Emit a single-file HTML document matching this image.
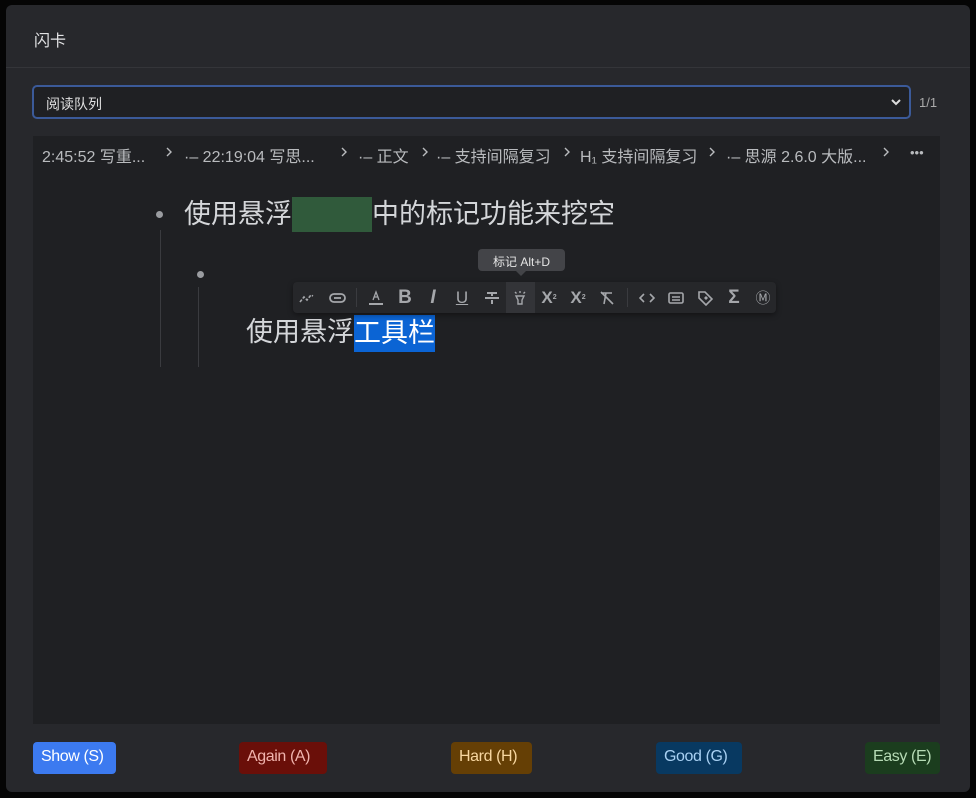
<!DOCTYPE html>
<html><head><meta charset="utf-8"><style>
*{box-sizing:border-box;margin:0;padding:0}
body{width:976px;height:798px;background:#050505;position:relative;overflow:hidden;font-family:"Liberation Sans","Noto Sans CJK SC",sans-serif;color:#d4d6d9}
.dlg{position:absolute;left:6px;top:5px;width:964px;height:787px;background:#27282c;border-radius:6px}
.hd{position:absolute;left:0;top:0;width:964px;height:63px;border-bottom:1px solid #343539;font-size:16px;color:#e1e2e4;padding:22px 0 0 28px}
.sel{position:absolute;left:26px;top:80px;width:879px;height:34px;border:2px solid #3b5a99;border-radius:5px;background:#1f2023;font-size:14px;padding:7px 0 0 12px;color:#e0e0e0}
.sel svg{position:absolute;right:8px;top:11px}
.cnt{position:absolute;left:913px;top:90px;font-size:13px;color:#aaa}
.ed{position:absolute;left:27px;top:131px;width:907px;height:588px;background:#1f2023}
.bc span{position:absolute;top:7px;font-size:16px;color:#b9bbbe;white-space:nowrap}
.bc svg{position:absolute;top:11px}
.b{position:absolute;font-size:27px;color:#d4d6d9;white-space:nowrap;line-height:34px}
.dot{position:absolute;width:7px;height:7px;border-radius:50%;background:#9a9ca0}
.vl{position:absolute;width:1px;background:#3a3b3f}
.tb{position:absolute;left:260px;top:146px;width:483px;height:31px;background:#26272a;border-radius:4px;box-shadow:0 2px 6px rgba(0,0,0,.4)}
.tb i{position:absolute;top:0;width:28px;height:31px;display:flex;align-items:center;justify-content:center;font-style:normal;font-size:17px;color:#a5a7ab}
.tip{position:absolute;left:445px;top:113px;width:87px;height:22px;background:#434448;border-radius:4px;font-size:12px;color:#e5e5e5;text-align:center;padding-top:4px}
.btn{position:absolute;top:737px;height:32px;border-radius:4px;font-size:16px;padding:6px 8px 0;white-space:nowrap;letter-spacing:-0.4px}
</style></head><body>
<div class="dlg">
<div class="hd">闪卡</div>
<div class="sel">阅读队列<svg width="10" height="8" viewBox="0 0 10 8"><path d="M1 2l4 4 4-4" stroke="#ddd" stroke-width="2" fill="none"/></svg></div>
<div class="cnt">1/1</div>
<div class="ed">
<div class="bc">
<span style="left:9px">2:45:52 写重...</span>
<svg style="left:133px" width="6" height="10" viewBox="0 0 6 10"><path d="M1 1l4 4-4 4" stroke="#b9bbbe" stroke-width="1.4" fill="none"/></svg>
<span style="left:151px">·– 22:19:04 写思...</span>
<svg style="left:308px" width="6" height="10" viewBox="0 0 6 10"><path d="M1 1l4 4-4 4" stroke="#b9bbbe" stroke-width="1.4" fill="none"/></svg>
<span style="left:325px">·– 正文</span>
<svg style="left:389px" width="6" height="10" viewBox="0 0 6 10"><path d="M1 1l4 4-4 4" stroke="#b9bbbe" stroke-width="1.4" fill="none"/></svg>
<span style="left:403px">·– 支持间隔复习</span>
<svg style="left:531px" width="6" height="10" viewBox="0 0 6 10"><path d="M1 1l4 4-4 4" stroke="#b9bbbe" stroke-width="1.4" fill="none"/></svg>
<span style="left:547px">H₁ 支持间隔复习</span>
<svg style="left:676px" width="6" height="10" viewBox="0 0 6 10"><path d="M1 1l4 4-4 4" stroke="#b9bbbe" stroke-width="1.4" fill="none"/></svg>
<span style="left:693px">·– 思源 2.6.0 大版...</span>
<svg style="left:850px" width="6" height="10" viewBox="0 0 6 10"><path d="M1 1l4 4-4 4" stroke="#b9bbbe" stroke-width="1.4" fill="none"/></svg>
<span style="left:877px;font-size:13px;top:9px">•••</span>
</div>
<div class="dot" style="left:123px;top:75px"></div>
<div class="b" style="left:151px;top:61px">使用悬浮<span style="display:inline-block;width:80px;height:35px;background:#305a3b;vertical-align:top"></span>中的标记功能来挖空</div>
<div class="vl" style="left:127px;top:94px;height:137px"></div>
<div class="dot" style="left:164px;top:135px"></div>
<div class="vl" style="left:165px;top:151px;height:80px"></div>
<div class="b" style="left:213px;top:179px">使用悬浮<span style="background:#0b64d4;color:#fff;display:inline-block;height:37px;padding-top:1px;vertical-align:top">工具栏</span></div>
<div class="tip">标记 Alt+D</div>
<div style="position:absolute;left:483px;top:135px;border:5px solid transparent;border-top-color:#434448"></div>
<div class="tb">
<i style="left:0px"><svg width="16" height="12" viewBox="0 0 16 12"><path d="M1 10l4-5 3 3 4-5 2 1" stroke="#a5a7ab" stroke-width="1.6" fill="none" stroke-dasharray="3 1.5"/></svg></i>
<i style="left:30px"><svg width="17" height="10" viewBox="0 0 17 10"><rect x="1" y="1" width="15" height="8" rx="4" stroke="#a5a7ab" stroke-width="1.8" fill="none"/><path d="M5 5h7" stroke="#a5a7ab" stroke-width="1.8"/></svg></i>
<div style="position:absolute;left:63px;top:6px;width:1px;height:19px;background:#3a3b3f"></div>
<i style="left:69px"><svg width="16" height="16" viewBox="0 0 16 16"><path d="M5 10l3-8 3 8M6 7h4" stroke="#a5a7ab" stroke-width="1.3" fill="none"/><path d="M1 14h14" stroke="#a5a7ab" stroke-width="2"/></svg></i>
<i style="left:98px;font-weight:bold;font-size:19px">B</i>
<i style="left:126px;font-weight:bold;font-style:italic;font-size:19px">I</i>
<i style="left:155px;text-decoration:underline">U</i>
<i style="left:185px"><svg width="16" height="16" viewBox="0 0 16 16"><path d="M3 3h10M8 3v3M1 8h14M8 10v4" stroke="#a5a7ab" stroke-width="2" fill="none"/></svg></i>
<div style="position:absolute;left:213px;top:0;width:29px;height:31px;background:#333438"></div>
<i style="left:213px"><svg width="14" height="16" viewBox="0 0 14 16"><path d="M7 1v2M2 2l1.5 1.5M12 2l-1.5 1.5M3 6h8l-2 4v4H5v-4z" stroke="#a5a7ab" stroke-width="1.4" fill="none"/></svg></i>
<i style="left:242px;font-weight:bold">X<sup style="font-size:7px">2</sup></i>
<i style="left:271px;font-weight:bold">X<sub style="font-size:7px">2</sub></i>
<i style="left:300px"><svg width="16" height="16" viewBox="0 0 16 16"><path d="M2 3h11M7 3l-2 11M2 2l12 12" stroke="#a5a7ab" stroke-width="1.6" fill="none"/></svg></i>
<div style="position:absolute;left:334px;top:6px;width:1px;height:19px;background:#3a3b3f"></div>
<i style="left:340px"><svg width="16" height="10" viewBox="0 0 16 10"><path d="M5 1L1 5l4 4M11 1l4 4-4 4" stroke="#a5a7ab" stroke-width="1.6" fill="none"/></svg></i>
<i style="left:369px"><svg width="16" height="12" viewBox="0 0 16 12"><rect x="1" y="1" width="14" height="10" rx="1.5" stroke="#a5a7ab" stroke-width="1.6" fill="none"/><path d="M4 5h8M4 8h8" stroke="#a5a7ab" stroke-width="1.4"/></svg></i>
<i style="left:398px"><svg width="16" height="16" viewBox="0 0 16 16"><path d="M2 2h6l7 7-6 6-7-7z" stroke="#a5a7ab" stroke-width="1.6" fill="none"/><path d="M7 8l2 2 2-2-2-2z" fill="#a5a7ab"/></svg></i>
<i style="left:427px;font-weight:bold;font-size:19px">Σ</i>
<i style="left:456px;font-size:15px">Ⓜ</i>
</div>
</div>
<div class="btn" style="left:27px;background:#3c7af0;color:#fff;width:83px">Show (S)</div>
<div class="btn" style="left:233px;background:#6a0f09;color:#f0b3ad;width:88px">Again (A)</div>
<div class="btn" style="left:445px;background:#653f05;color:#f7d6a0;width:81px">Hard (H)</div>
<div class="btn" style="left:650px;background:#083961;color:#a9d1f3;width:86px">Good (G)</div>
<div class="btn" style="left:859px;background:#1b3d1e;color:#b6dbb5;width:75px">Easy (E)</div>
</div>
</body></html>
